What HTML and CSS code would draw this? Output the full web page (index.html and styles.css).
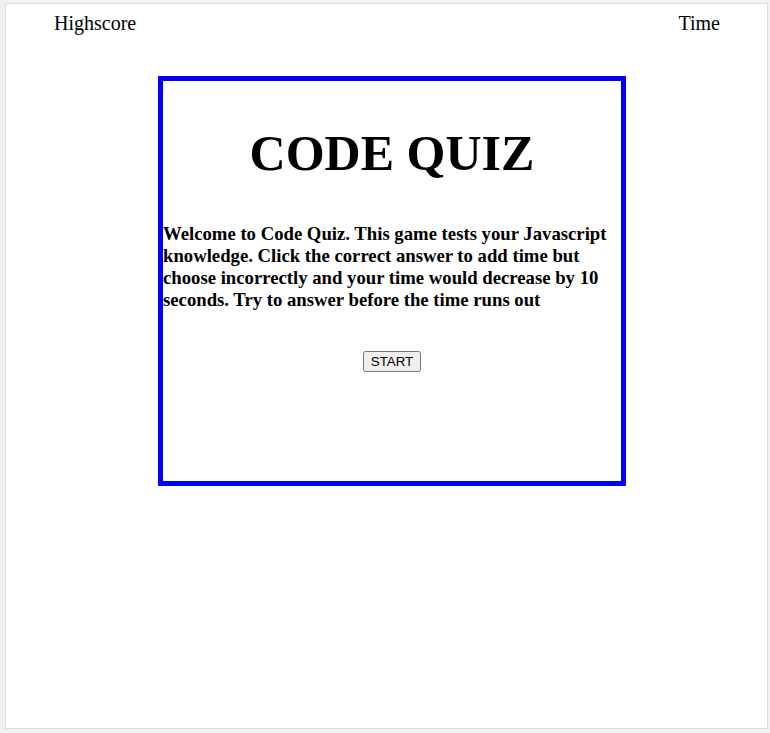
FILE: index.html
```html
<!DOCTYPE html>
<html>
<head>
<meta charset="utf-8">
<link rel="stylesheet" href="styles.css">
</head>
<body>
<div class="frame">
  <header class="topbar">
    <span class="link">Highscore</span>
    <span class="link">Time</span>
  </header>
  <main class="quiz">
    <h1 class="title">CODE QUIZ</h1>
    <h3 class="intro">Welcome to Code Quiz. This game tests your Javascript knowledge. Click the correct answer to add time but choose incorrectly and your time would decrease by 10 seconds. Try to answer before the time runs out</h3>
    <div class="actions"><button class="start">START</button></div>
  </main>
</div>
</body>
</html>
```
FILE: styles.css
```css
html, body {
  margin: 0;
  padding: 0;
}
body {
  background: #f1f1f1;
  padding: 3px 2px 4px 5px;
  font-family: "Liberation Serif", "Times New Roman", serif;
  color: #000;
}
.frame {
  background: #fff;
  border: 1px solid #dcdcdc;
  box-sizing: border-box;
  height: 726px;
}
.topbar {
  display: flex;
  justify-content: space-between;
  padding: 8px 47px 0 48px;
  font-size: 20px;
  line-height: 23px;
}
.quiz {
  width: 468px;
  height: 410px;
  box-sizing: border-box;
  border: 5px solid #0000ff;
  margin: 41px 0 0 152px;
}
.title {
  font-size: 50px;
  font-weight: bold;
  text-align: center;
  margin: 44px 0 0 0;
  line-height: 57px;
}
.intro {
  font-size: 18.72px;
  font-weight: bold;
  margin: 41px 0 0 0;
}
.actions {
  text-align: center;
  margin-top: 40px;
}
.start {
  font-family: "Liberation Sans", Arial, sans-serif;
  font-size: 13.33px;
}
```
